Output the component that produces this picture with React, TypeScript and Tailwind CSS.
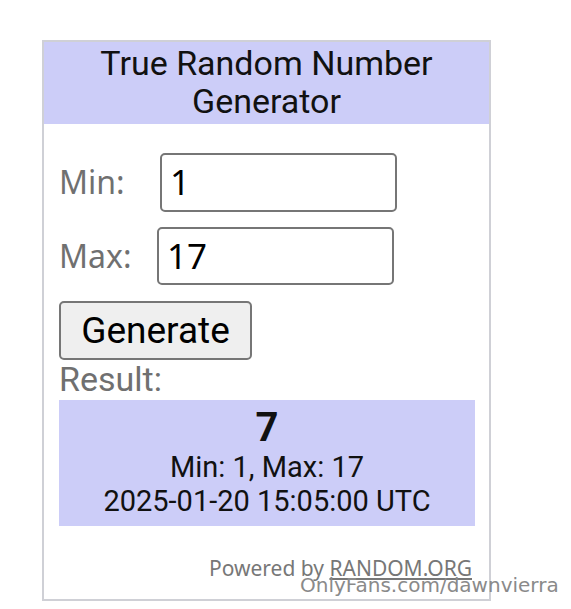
const App = () => {
    return (
        <div className="relative w-[571px] h-[609px] bg-white overflow-hidden">
            <div className="pt-[40px] pl-[42px]">
                <div className="w-[449px] h-[561px] border-2 border-[#cfd0d6] flex flex-col">
                    <div className="bg-[#cccdf8] h-[82px] flex flex-col items-center justify-center text-[34px] leading-[38px] text-[#111] font-['Roboto',sans-serif]">
                        <div className="-mt-[2px]">True Random Number</div>
                        <div>Generator</div>
                    </div>
                    <div className="px-[15px] pt-[29px] font-['Noto_Sans',sans-serif]">
                        <div className="flex items-center h-[58px]">
                            <span className="text-[32px] text-[#707070] w-[101px]">Min:</span>
                            <div className="w-[237px] h-[59px] border-2 border-[#767676] rounded-[5px] flex items-center pl-[8px] text-[35px] text-black">1</div>
                        </div>
                        <div className="flex items-center h-[58px] mt-[16px]">
                            <span className="text-[32px] text-[#707070] w-[98px]">Max:</span>
                            <div className="w-[237px] h-[58px] border-2 border-[#767676] rounded-[5px] flex items-center pl-[8px] text-[35px] text-black">17</div>
                        </div>
                        <button className="mt-[16px] w-[193px] h-[59px] bg-[#efefef] border-2 border-[#767676] rounded-[5px] text-[37px] leading-[40px] text-black font-['Roboto',sans-serif]">
                            Generate
                        </button>
                        <div className="text-[34px] leading-[36px] text-[#707070] font-['Roboto',sans-serif] mt-[1px]">Result:</div>
                        <div className="mt-[3px] w-[416px] h-[126px] bg-[#cccdf8] flex flex-col items-center font-['Roboto',sans-serif] text-[#111]">
                            <div className="text-[40px] font-bold leading-[48px] mt-[4px]">7</div>
                            <div className="text-[29px] leading-[34px] mt-[-2px]">Min: 1, Max: 17</div>
                            <div className="text-[29px] leading-[34px]">2025-01-20 15:05:00 UTC</div>
                        </div>
                        <div className="mt-[27px] flex justify-end pr-[2px] text-[21px] text-[#777] font-['Noto_Sans',sans-serif]">
                            <span>Powered by <span className="underline">RANDOM.ORG</span></span>
                        </div>
                    </div>
                </div>
            </div>
            <div className="absolute left-[300px] top-[572px] text-[20px] leading-[26px] text-[#8a8a8a] font-['DejaVu_Sans',sans-serif]">
                OnlyFans.com/dawnvierra
            </div>
        </div>
    )
}

export default App
